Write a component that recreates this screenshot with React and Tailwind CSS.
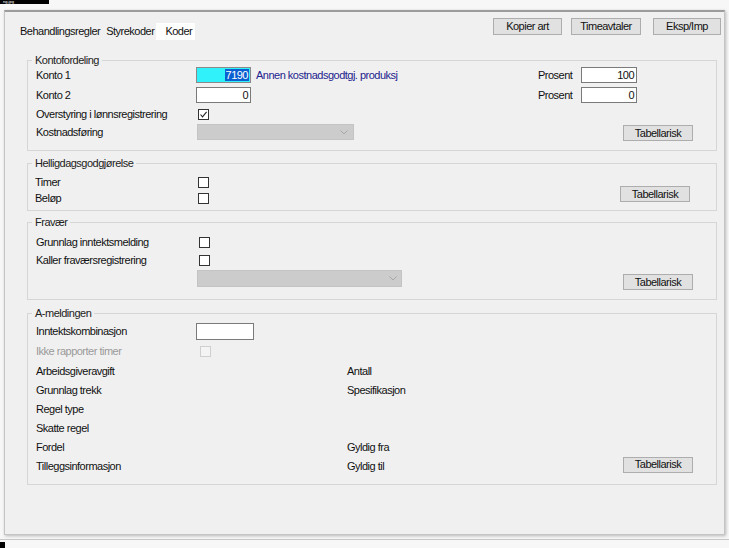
import React from 'react';

const font = { fontFamily: '"Liberation Sans", Arial, sans-serif' };

const Btn = ({ children, className = '' }) => (
    <div className={`flex items-center justify-center bg-[#e1e1e1] border border-[#adadad] text-[#111] ${className}`}>
        {children}
    </div>
);

const Check = ({ checked, disabled }) => (
    <div className={`w-[11px] h-[11px] border flex items-center justify-center ${disabled ? 'border-[#cfcfcf] bg-[#f4f4f4]' : 'border-[#333] bg-white'}`}>
        {checked && (
            <svg width="9" height="9" viewBox="0 0 9 9">
                <polyline points="1.5,4.5 3.5,6.8 7.6,1.8" fill="none" stroke="#222" strokeWidth="1.1" />
            </svg>
        )}
    </div>
);

const Chevron = () => (
    <svg width="8" height="5" viewBox="0 0 8 5">
        <polyline points="0.5,0.5 4,4 7.5,0.5" fill="none" stroke="#a8a8a8" strokeWidth="1" />
    </svg>
);

const Group = ({ title, className = '', children }) => (
    <div className={`relative ml-[22px] mr-[7px] border border-[#d6d6d6] ${className}`}>
        <span className="absolute -top-[7px] left-[4px] px-[3px] bg-[#f0f0f0] leading-[13px] text-[#222]">{title}</span>
        {children}
    </div>
);

const Label = ({ children, className = '' }) => (
    <div className={`w-[160px] shrink-0 ${className}`}>{children}</div>
);

const TextBox = ({ value, className = '' }) => (
    <div className={`h-[16px] bg-white border border-[#7a7a7a] flex items-center justify-end pr-[2px] ${className}`}>{value}</div>
);

const App = () => {
    return (
        <div className="relative w-[729px] h-[548px] bg-[#f7f7f7] overflow-hidden text-[11px] tracking-[-0.5px] text-[#111]" style={font}>
            {/* title tab, mostly scrolled off */}
            <div className="h-[4px] w-[49px] bg-black text-white text-[4px] leading-[4px] pl-[3px] tracking-normal">ng.jpg</div>

            <div className="mt-[6px] ml-[4px] w-[721px] h-[525px] bg-[#f0f0f0] border border-[#c4c4c4] border-t-2 border-t-[#9c9c9c] shadow-[1px_1px_3px_rgba(0,0,0,0.25)] flex flex-col">
                {/* header */}
                <div className="flex justify-between h-[29px]">
                    <div className="flex items-end ml-[12px] mb-[1px]">
                        <div className="h-[17px] flex items-center px-[3px]">Behandlingsregler</div>
                        <div className="h-[17px] flex items-center pl-[3px] pr-[2px]">Styrekoder</div>
                        <div className="h-[17px] flex items-center pl-[9px] pr-[3px] bg-white">Koder</div>
                    </div>
                    <div className="flex items-start mt-[6px] mr-[3px] gap-[9px]">
                        <Btn className="w-[69px] h-[17px]">Kopier art</Btn>
                        <Btn className="w-[70px] h-[17px]">Timeavtaler</Btn>
                        <Btn className="w-[68px] h-[17px] ml-[3px]">Eksp/Imp</Btn>
                    </div>
                </div>

                {/* Kontofordeling */}
                <Group title="Kontofordeling" className="mt-[19px] pt-[4px] pb-[9px] pl-[8px] pr-[23px]">
                    <div className="flex items-center h-[20px]">
                        <Label>Konto 1</Label>
                        <div className="w-[55px] h-[16px] bg-[#30f0fa] border border-[#8a8a8a] flex items-center justify-end pr-[1px]">
                            <span className="bg-[#0a5fd1] text-white leading-[12px] px-[1px]">7190</span>
                        </div>
                        <div className="ml-[5px] text-[#23238e]">Annen kostnadsgodtgj. produksj</div>
                        <div className="ml-auto w-[43px]">Prosent</div>
                        <TextBox value="100" className="w-[56px] mr-[56px]" />
                    </div>
                    <div className="flex items-center h-[20px]">
                        <Label>Konto 2</Label>
                        <TextBox value="0" className="w-[55px]" />
                        <div className="ml-auto w-[43px]">Prosent</div>
                        <TextBox value="0" className="w-[56px] mr-[56px]" />
                    </div>
                    <div className="flex items-center h-[18px]">
                        <Label>Overstyring i lønnsregistrering</Label>
                        <div className="ml-[2px]"><Check checked /></div>
                    </div>
                    <div className="flex items-center h-[18px]">
                        <Label>Kostnadsføring</Label>
                        <div className="ml-[1px] w-[157px] h-[16px] bg-[#cccccc] border border-[#c4c4c4] flex items-center justify-end pr-[5px]">
                            <Chevron />
                        </div>
                        <Btn className="ml-auto w-[70px] h-[16px] mt-[2px]">Tabellarisk</Btn>
                    </div>
                </Group>

                {/* Helligdagsgodgjørelse */}
                <Group title="Helligdagsgodgjørelse" className="mt-[12px] pt-[10px] pb-[4px] pl-[7px] pr-[26px] flex">
                    <div className="flex flex-col">
                        <div className="flex items-center h-[16px]">
                            <Label className="w-[163px]">Timer</Label>
                            <Check />
                        </div>
                        <div className="flex items-center h-[16px]">
                            <Label className="w-[163px]">Beløp</Label>
                            <Check />
                        </div>
                    </div>
                    <Btn className="ml-auto self-end mb-[4px] w-[70px] h-[16px]">Tabellarisk</Btn>
                </Group>

                {/* Fravær */}
                <Group title="Fravær" className="mt-[11px] pt-[11px] pb-[9px] pl-[8px] pr-[23px]">
                    <div className="flex items-center h-[16px]">
                        <Label className="w-[163px]">Grunnlag inntektsmelding</Label>
                        <Check />
                    </div>
                    <div className="flex items-center h-[16px] mt-[2px]">
                        <Label className="w-[163px]">Kaller fraværsregistrering</Label>
                        <Check />
                    </div>
                    <div className="flex items-start mt-[2px]">
                        <div className="ml-[161px] w-[205px] h-[17px] bg-[#cccccc] border border-[#c4c4c4] flex items-center justify-end pr-[4px]">
                            <Chevron />
                        </div>
                        <Btn className="ml-auto mt-[4px] w-[70px] h-[16px]">Tabellarisk</Btn>
                    </div>
                </Group>

                {/* A-meldingen */}
                <Group title="A-meldingen" className="mt-[13px] pt-[7px] pb-[8px] pl-[8px] pr-[23px]">
                    <div className="flex items-center h-[20px]">
                        <Label>Inntektskombinasjon</Label>
                        <div className="w-[58px] h-[17px] bg-white border border-[#7a7a7a]" />
                    </div>
                    <div className="flex items-center h-[20px]">
                        <Label className="w-[164px] text-[#9a9a9a]">Ikke rapporter timer</Label>
                        <Check disabled />
                    </div>
                    <div className="flex items-center h-[20px]">
                        <div className="w-[311px]">Arbeidsgiveravgift</div>
                        <div>Antall</div>
                    </div>
                    <div className="flex items-center h-[19px]">
                        <div className="w-[311px]">Grunnlag trekk</div>
                        <div>Spesifikasjon</div>
                    </div>
                    <div className="flex items-center h-[19px]">
                        <div className="w-[311px]">Regel type</div>
                    </div>
                    <div className="flex items-center h-[19px]">
                        <div className="w-[311px]">Skatte regel</div>
                    </div>
                    <div className="flex items-center h-[19px]">
                        <div className="w-[311px]">Fordel</div>
                        <div>Gyldig fra</div>
                    </div>
                    <div className="flex items-center h-[19px]">
                        <div className="w-[311px]">Tilleggsinformasjon</div>
                        <div>Gyldig til</div>
                        <Btn className="ml-auto w-[70px] h-[16px] -mt-[4px]">Tabellarisk</Btn>
                    </div>
                </Group>
            </div>

            {/* bottom strip */}
            <div className="mt-[4px] h-[1px] bg-[#c8c8c8]" />
            <div className="mt-[2px] w-[5px] h-[6px] bg-black" />
        </div>
    );
};

export default App;
